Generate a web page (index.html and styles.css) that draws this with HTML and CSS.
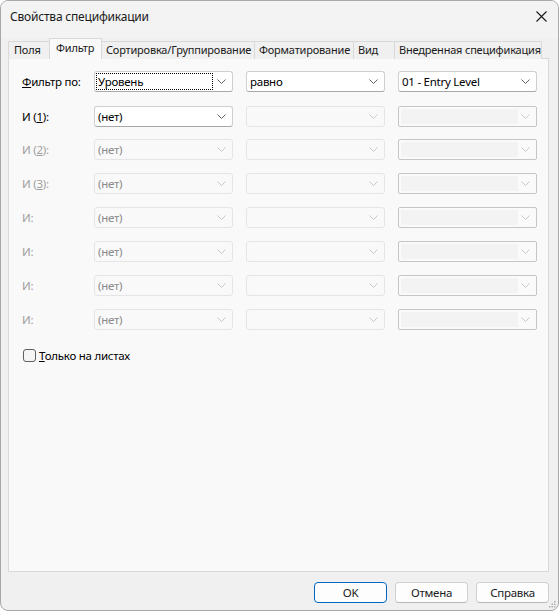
FILE: index.html
```html
<!DOCTYPE html>
<html lang="ru">
<head>
<meta charset="utf-8">
<title>Свойства спецификации</title>
<link rel="stylesheet" href="styles.css">
</head>
<body>
<div class="window">
  <div class="titlebar">
    <span class="title">Свойства спецификации</span>
    <svg class="close" width="11" height="11" viewBox="0 0 11 11"><path d="M0.5 0.5 L10.5 10.5 M10.5 0.5 L0.5 10.5" stroke="#1a1a1a" stroke-width="1.1" fill="none"/></svg>
  </div>
  <div class="tabs">
    <div class="tab t-fields">Поля</div>
    <div class="tab active t-filter">Фильтр</div>
    <div class="tab t-sort">Сортировка/Группирование</div>
    <div class="tab t-format">Форматирование</div>
    <div class="tab t-view">Вид</div>
    <div class="tab t-embed">Внедренная спецификация</div>
  </div>
  <div class="panel">
    <div class="grid">
      <div class="label"><u>Ф</u>ильтр по:</div>
      <div class="combo"><span class="val focus">Уровень</span><svg class="chev" width="9" height="5" viewBox="0 0 9 5"><polyline points="0.5,0.5 4.5,4.5 8.5,0.5" fill="none" stroke="#606060"/></svg></div>
      <div class="combo"><span class="val">равно</span><svg class="chev" width="9" height="5" viewBox="0 0 9 5"><polyline points="0.5,0.5 4.5,4.5 8.5,0.5" fill="none" stroke="#606060"/></svg></div>
      <div class="combo"><span class="val">01 - Entry Level</span><svg class="chev" width="9" height="5" viewBox="0 0 9 5"><polyline points="0.5,0.5 4.5,4.5 8.5,0.5" fill="none" stroke="#606060"/></svg></div>

      <div class="label first">И (<u>1</u>):</div>
      <div class="combo first"><span class="val">(нет)</span><svg class="chev" width="9" height="5" viewBox="0 0 9 5"><polyline points="0.5,0.5 4.5,4.5 8.5,0.5" fill="none" stroke="#606060"/></svg></div>
      <div class="combo dis first"><span class="val"></span><svg class="chev" width="9" height="5" viewBox="0 0 9 5"><polyline points="0.5,0.5 4.5,4.5 8.5,0.5" fill="none" stroke="#c8c8c8"/></svg></div>
      <div class="combo edit first"><span class="fill"></span><svg class="chev" width="9" height="5" viewBox="0 0 9 5"><polyline points="0.5,0.5 4.5,4.5 8.5,0.5" fill="none" stroke="#c8c8c8"/></svg></div>

      <div class="label dis">И (<u>2</u>):</div>
      <div class="combo dis"><span class="val">(нет)</span><svg class="chev" width="9" height="5" viewBox="0 0 9 5"><polyline points="0.5,0.5 4.5,4.5 8.5,0.5" fill="none" stroke="#c8c8c8"/></svg></div>
      <div class="combo dis"><span class="val"></span><svg class="chev" width="9" height="5" viewBox="0 0 9 5"><polyline points="0.5,0.5 4.5,4.5 8.5,0.5" fill="none" stroke="#c8c8c8"/></svg></div>
      <div class="combo edit"><span class="fill"></span><svg class="chev" width="9" height="5" viewBox="0 0 9 5"><polyline points="0.5,0.5 4.5,4.5 8.5,0.5" fill="none" stroke="#c8c8c8"/></svg></div>

      <div class="label dis">И (<u>3</u>):</div>
      <div class="combo dis"><span class="val">(нет)</span><svg class="chev" width="9" height="5" viewBox="0 0 9 5"><polyline points="0.5,0.5 4.5,4.5 8.5,0.5" fill="none" stroke="#c8c8c8"/></svg></div>
      <div class="combo dis"><span class="val"></span><svg class="chev" width="9" height="5" viewBox="0 0 9 5"><polyline points="0.5,0.5 4.5,4.5 8.5,0.5" fill="none" stroke="#c8c8c8"/></svg></div>
      <div class="combo edit"><span class="fill"></span><svg class="chev" width="9" height="5" viewBox="0 0 9 5"><polyline points="0.5,0.5 4.5,4.5 8.5,0.5" fill="none" stroke="#c8c8c8"/></svg></div>

      <div class="label dis">И:</div>
      <div class="combo dis"><span class="val">(нет)</span><svg class="chev" width="9" height="5" viewBox="0 0 9 5"><polyline points="0.5,0.5 4.5,4.5 8.5,0.5" fill="none" stroke="#c8c8c8"/></svg></div>
      <div class="combo dis"><span class="val"></span><svg class="chev" width="9" height="5" viewBox="0 0 9 5"><polyline points="0.5,0.5 4.5,4.5 8.5,0.5" fill="none" stroke="#c8c8c8"/></svg></div>
      <div class="combo edit"><span class="fill"></span><svg class="chev" width="9" height="5" viewBox="0 0 9 5"><polyline points="0.5,0.5 4.5,4.5 8.5,0.5" fill="none" stroke="#c8c8c8"/></svg></div>

      <div class="label dis">И:</div>
      <div class="combo dis"><span class="val">(нет)</span><svg class="chev" width="9" height="5" viewBox="0 0 9 5"><polyline points="0.5,0.5 4.5,4.5 8.5,0.5" fill="none" stroke="#c8c8c8"/></svg></div>
      <div class="combo dis"><span class="val"></span><svg class="chev" width="9" height="5" viewBox="0 0 9 5"><polyline points="0.5,0.5 4.5,4.5 8.5,0.5" fill="none" stroke="#c8c8c8"/></svg></div>
      <div class="combo edit"><span class="fill"></span><svg class="chev" width="9" height="5" viewBox="0 0 9 5"><polyline points="0.5,0.5 4.5,4.5 8.5,0.5" fill="none" stroke="#c8c8c8"/></svg></div>

      <div class="label dis">И:</div>
      <div class="combo dis"><span class="val">(нет)</span><svg class="chev" width="9" height="5" viewBox="0 0 9 5"><polyline points="0.5,0.5 4.5,4.5 8.5,0.5" fill="none" stroke="#c8c8c8"/></svg></div>
      <div class="combo dis"><span class="val"></span><svg class="chev" width="9" height="5" viewBox="0 0 9 5"><polyline points="0.5,0.5 4.5,4.5 8.5,0.5" fill="none" stroke="#c8c8c8"/></svg></div>
      <div class="combo edit"><span class="fill"></span><svg class="chev" width="9" height="5" viewBox="0 0 9 5"><polyline points="0.5,0.5 4.5,4.5 8.5,0.5" fill="none" stroke="#c8c8c8"/></svg></div>

      <div class="label dis">И:</div>
      <div class="combo dis"><span class="val">(нет)</span><svg class="chev" width="9" height="5" viewBox="0 0 9 5"><polyline points="0.5,0.5 4.5,4.5 8.5,0.5" fill="none" stroke="#c8c8c8"/></svg></div>
      <div class="combo dis"><span class="val"></span><svg class="chev" width="9" height="5" viewBox="0 0 9 5"><polyline points="0.5,0.5 4.5,4.5 8.5,0.5" fill="none" stroke="#c8c8c8"/></svg></div>
      <div class="combo edit"><span class="fill"></span><svg class="chev" width="9" height="5" viewBox="0 0 9 5"><polyline points="0.5,0.5 4.5,4.5 8.5,0.5" fill="none" stroke="#c8c8c8"/></svg></div>
    </div>
    <label class="check"><span class="box"></span><span><u>Т</u>олько на листах</span></label>
  </div>
  <div class="footer">
    <div class="btn primary">OK</div>
    <div class="btn">Отмена</div>
    <div class="btn">Справка</div>
  </div>
  <svg class="grip" width="7" height="7" viewBox="0 0 7 7"><g fill="#b0b0b0"><rect x="5" y="0" width="1.5" height="1.5"/><rect x="2.5" y="2.5" width="1.5" height="1.5"/><rect x="5" y="2.5" width="1.5" height="1.5"/><rect x="0" y="5" width="1.5" height="1.5"/><rect x="2.5" y="5" width="1.5" height="1.5"/><rect x="5" y="5" width="1.5" height="1.5"/></g></svg>
</div>
</body>
</html>
```
FILE: styles.css
```css
html, body {
  margin: 0;
  padding: 0;
  background: #ffffff;
}
body {
  font-family: "Noto Sans", "Liberation Sans", sans-serif;
  font-size: 11.5px;
  letter-spacing: -0.25px;
  color: #000;
}
.window {
  position: relative;
  box-sizing: border-box;
  width: 559px;
  height: 611px;
  border: 1px solid #a8a8a8;
  border-radius: 8px;
  background: #f0f0f0;
  overflow: hidden;
}
.titlebar {
  height: 37px;
  display: flex;
  align-items: center;
  justify-content: space-between;
  padding: 0 11px 6px 9px;
  box-sizing: border-box;
  background: #f3f3f3;
}
.title {
  font-size: 12px;
  letter-spacing: -0.2px;
  color: #1a1a1a;
}
.close {
  display: block;
}
.tabs {
  display: flex;
  align-items: flex-end;
  height: 21px;
  margin-left: 7px;
  margin-bottom: -1px;
  position: relative;
  z-index: 1;
}
.tab {
  flex: none;
  box-sizing: border-box;
  height: 18px;
  line-height: 16px;
  padding-left: 5px;
  border: 1px solid #d9d9d9;
  border-bottom: none;
  border-left: none;
  background: #f0f0f0;
  color: #1a1a1a;
  white-space: nowrap;
  overflow: hidden;
  font-size: 11px;
  letter-spacing: -0.2px;
}
.t-fields { width: 42px; border-left: 1px solid #d9d9d9; }
.t-filter { width: 53px; }
.t-sort { width: 153px; padding-left: 4px; }
.t-format { width: 99px; padding-left: 4px; }
.t-view { width: 41px; padding-left: 4px; }
.t-embed { width: 147px; padding-left: 4px; }
.tab.active {
  height: 21px;
  line-height: 17px;
  background: #f9f9f9;
  border-left: 1px solid #d9d9d9;
  margin-left: -1px;
  padding-left: 6px;
}
.panel {
  box-sizing: border-box;
  width: 541px;
  height: 514px;
  margin-left: 7px;
  border: 1px solid #d9d9d9;
  background: #f9f9f9;
  padding: 12px 0 0 13px;
}
.grid {
  display: grid;
  grid-template-columns: 59px 139px 139px 139px;
  column-gap: 13px;
  row-gap: 13px;
  grid-auto-rows: 21px;
}
.label {
  display: flex;
  align-items: center;
  color: #000;
  white-space: nowrap;
}
.label.first, .combo.first {
  margin-top: 1px;
}
.label.dis {
  color: #a0a0a0;
}
.combo {
  box-sizing: border-box;
  height: 21px;
  display: flex;
  align-items: center;
  justify-content: space-between;
  padding: 0 6px 0 2px;
  background: #ffffff;
  border: 1px solid #cfcfcf;
  border-bottom-color: #a8a8a8;
  border-radius: 3px;
}
.val {
  padding: 0 1px;
  line-height: 15px;
  white-space: nowrap;
  color: #000;
}
.val.focus {
  width: 113px;
  outline: 1px dotted #000;
  outline-offset: 0;
  height: 15px;
}
.combo.dis {
  background: #f9f9f9;
  border: 1px solid #e5e5e5;
}
.combo.dis .val {
  color: #8a8a8a;
}
.combo.edit {
  background: #fafafa;
  border: 1px solid #c6c6c6;
  border-radius: 2px;
  padding: 2px 6px 2px 2px;
}
.fill {
  width: 117px;
  height: 15px;
  background: #f3f3f3;
}
.chev {
  display: block;
  flex: none;
}
.check {
  display: flex;
  align-items: center;
  gap: 3px;
  margin-top: 18px;
  margin-left: 1px;
  color: #000;
}
.box {
  box-sizing: border-box;
  width: 13px;
  height: 13px;
  border: 1px solid #606060;
  border-radius: 3px;
  background: #f5f5f5;
}
.footer {
  display: flex;
  justify-content: flex-end;
  gap: 8px;
  padding: 10px 9px 0 0;
}
.btn {
  box-sizing: border-box;
  width: 73px;
  height: 21px;
  line-height: 19px;
  text-align: center;
  border: 1px solid #d0d0d0;
  border-bottom-color: #b8b8b8;
  border-radius: 4px;
  background: #fdfdfd;
  color: #1a1a1a;
}
.btn.primary {
  border: 1px solid #0067c0;
}
.grip {
  position: absolute;
  right: 2px;
  bottom: 2px;
}
```
